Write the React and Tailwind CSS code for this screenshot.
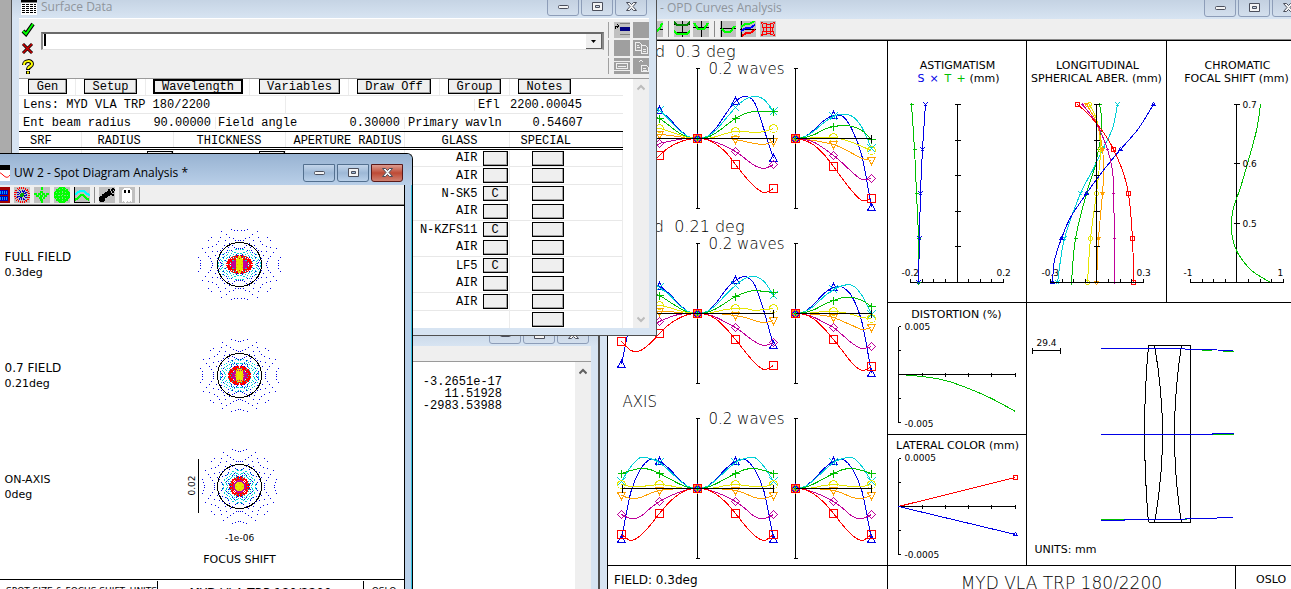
const COLORS = {
  blue: "#0000e6",
  cyan: "#00cfd6",
  green: "#00bf00",
  yellow: "#e6e600",
  orange: "#ffa000",
  purple: "#bf0099",
  red: "#ff0000",
};

// Wavefront error per wavelength, nine samples from pupil centre to edge
const OPD_ROWS = [
  {
    y: 138,
    left: {
      blue: [0, -2, -10, -20, -28, -30, -18, 4, 51],
      cyan: [0, -2, -9, -19, -28, -31, -31, -21, -7],
      green: [0, -1, -6, -13, -20, -22, -22, -19, -15],
      yellow: [0, -1, -4, -7, -10, -8, -6, -5, -4],
      orange: [0, 0, -2, -3, -4, 0, 3, 5, 5],
      purple: [0, 0, 1, 3, 5, 12, 18, 22, 20],
      red: [0, 1, 4, 9, 17, 27, 34, 38, 30],
    },
    middle: {
      blue: [0, -2, -11, -25, -37, -42, -36, -9, 20],
      cyan: [0, -2, -9, -20, -31, -39, -42, -39, -27],
      green: [0, -1, -6, -13, -20, -25, -27, -27, -27],
      yellow: [0, 0, -2, -5, -7, -7, -6, -7, -10],
      orange: [0, 0, 0, 0, 1, 3, 5, 6, 3],
      purple: [0, 1, 4, 8, 13, 20, 27, 30, 26],
      red: [0, 1, 6, 14, 26, 38, 48, 54, 50],
    },
    right: {
      blue: [0, -2, -9, -18, -23, -22, -8, 18, 69],
      cyan: [0, -2, -8, -16, -22, -24, -22, -11, 10],
      green: [0, -1, -4, -9, -12, -13, -12, -8, 1],
      yellow: [0, 0, -1, -1, -1, 1, 4, 8, 12],
      orange: [0, 1, 2, 4, 6, 10, 15, 20, 22],
      purple: [0, 1, 4, 10, 17, 25, 34, 41, 40],
      red: [0, 2, 7, 16, 28, 41, 53, 62, 60],
    },
  },
  {
    y: 313,
    left: {
      blue: [0, -2, -10, -20, -27, -29, -18, 6, 51],
      cyan: [0, -2, -9, -19, -26, -31, -31, -21, -7],
      green: [0, -1, -6, -12, -18, -21, -22, -19, -15],
      yellow: [0, -1, -3, -6, -8, -7, -5, -4, -4],
      orange: [0, 0, -1, -2, -2, 1, 4, 6, 5],
      purple: [0, 0, 1, 4, 8, 13, 18, 20, 18],
      red: [0, 1, 5, 11, 20, 30, 37, 37, 28],
    },
    middle: {
      blue: [0, -2, -11, -24, -33, -37, -29, -2, 32],
      cyan: [0, -2, -9, -19, -28, -35, -37, -32, -18],
      green: [0, -1, -5, -11, -17, -21, -23, -22, -21],
      yellow: [0, 0, -2, -4, -5, -5, -3, -4, -5],
      orange: [0, 0, 0, 1, 2, 4, 7, 9, 7],
      purple: [0, 1, 4, 9, 14, 21, 28, 32, 29],
      red: [0, 1, 6, 15, 26, 38, 49, 56, 52],
    },
    right: {
      blue: [0, -2, -10, -20, -26, -26, -16, 9, 60],
      cyan: [0, -2, -8, -17, -24, -28, -28, -18, 1],
      green: [0, -1, -4, -9, -13, -16, -16, -13, -7],
      yellow: [0, 0, -1, -2, -2, -1, 1, 4, 5],
      orange: [0, 0, 1, 2, 4, 8, 12, 16, 14],
      purple: [0, 1, 4, 9, 14, 22, 30, 35, 33],
      red: [0, 1, 6, 15, 26, 38, 50, 57, 53],
    },
  },
];

const AXIAL = {
  blue: [0, -2, -10, -20, -27, -29, -19, 3, 51],
  cyan: [0, -2, -9, -18, -26, -30, -31, -22, -7],
  green: [0, -1, -5, -10, -15, -19, -20, -18, -15],
  yellow: [0, 0, -1, -3, -4, -3, -2, -2, -4],
  orange: [0, 0, 0, 1, 2, 5, 9, 10, 7],
  purple: [0, 1, 4, 8, 13, 20, 28, 30, 26],
  red: [0, 1, 6, 14, 25, 37, 47, 52, 46],
};
OPD_ROWS.push({ y: 488, left: AXIAL, middle: AXIAL, right: AXIAL });

const smooth = (pts) => {
  let d = `M${pts[0][0]} ${pts[0][1]}`;
  for (let i = 0; i < pts.length - 1; i++) {
    const p0 = pts[i - 1] || pts[i];
    const p1 = pts[i];
    const p2 = pts[i + 1];
    const p3 = pts[i + 2] || p2;
    d += `C${p1[0] + (p2[0] - p0[0]) / 6} ${p1[1] + (p2[1] - p0[1]) / 6} ${
      p2[0] - (p3[0] - p1[0]) / 6
    } ${p2[1] - (p3[1] - p1[1]) / 6} ${p2[0]} ${p2[1]}`;
  }
  return d;
};

const markerPath = (color, x, y, r) => {
  switch (color) {
    case "blue":
      return `M${x} ${y - r}L${x + r} ${y + r - 1}H${x - r}Z`;
    case "cyan":
      return `M${x - r} ${y - r}L${x + r} ${y + r}M${x + r} ${y - r}L${x - r} ${y + r}`;
    case "green":
      return `M${x - r} ${y}H${x + r}M${x} ${y - r}V${y + r}`;
    case "yellow":
      return `M${x - r} ${y}a${r} ${r} 0 1 0 ${2 * r} 0a${r} ${r} 0 1 0 ${-2 * r} 0`;
    case "orange":
      return `M${x} ${y + r}L${x + r} ${y - r + 1}H${x - r}Z`;
    case "purple":
      return `M${x} ${y - r}L${x + r} ${y}L${x} ${y + r}L${x - r} ${y}Z`;
    default:
      return `M${x - r} ${y - r}H${x + r}V${y + r}H${x - r}Z`;
  }
};

const PlotText = ({ size = 11, children, ...rest }) => (
  <text
    fontFamily="'DejaVu Sans', sans-serif"
    fontSize={size}
    fontWeight={size > 12 ? 200 : 400}
    fill="#000"
    stroke="none"
    {...rest}
  >
    {children}
  </text>
);

const Plot = ({ box, label, children }) => (
  <svg
    viewBox={box}
    className="block h-auto w-full"
    role="img"
    aria-label={label}
    fill="none"
    stroke="#000"
    strokeWidth="1"
    shapeRendering="crispEdges"
  >
    <g transform="translate(0.5 0.5)">{children}</g>
  </svg>
);

const OpdCurves = ({ x, y, dir = 1, data }) => (
  <>
    {Object.keys(data).map((c) => (
      <g key={c} stroke={COLORS[c]}>
        <path d={smooth(data[c].map((v, i) => [x + dir * i * 9.5, y + v]))} />
        {[0, 4, 8].map((i) => (
          <path key={i} d={markerPath(c, x + dir * i * 9.5, y + data[c][i], 4)} />
        ))}
      </g>
    ))}
  </>
);

const OpdPanel = () => (
  <Plot box="608 41 279 524" label="OPD curves">
    {OPD_ROWS.map((row) => (
      <g key={row.y}>
        <path
          d={`M697 ${row.y - 70}v140m-2 0h4m-4 -140h4M795 ${row.y - 70}v140m-2 0h4m-4 -140h4`}
        />
        <OpdCurves x={697} y={row.y} dir={-1} data={row.left} />
        <OpdCurves x={697} y={row.y} data={row.middle} />
        <OpdCurves x={795} y={row.y} data={row.right} />
        <path
          d={`M622 ${row.y}h151M622 ${row.y - 4}v8M773 ${row.y - 4}v8M795 ${row.y}h76M871 ${row.y - 4}v8`}
        />
        <PlotText size={15} x={708} y={row.y - 65}>
          0.2 waves
        </PlotText>
      </g>
    ))}
    <PlotText size={16} x={735} y={56} textAnchor="end">
      {"Full Field\u00a0 0.3 deg"}
    </PlotText>
    <PlotText size={16} x={744} y={231} textAnchor="end">
      {"0.7 Field\u00a0 0.21 deg"}
    </PlotText>
    <PlotText size={15} x={622} y={406}>
      AXIS
    </PlotText>
  </Plot>
);

const BottomAxis = ({ x, y = 282 }) => (
  <path
    d={
      `M${x} ${y}h93` +
      [0, 12, 23, 35, 58, 70, 81, 93].map((t) => `M${x + t} ${y}v-4`).join("")
    }
  />
);

const SideAxis = ({ x, ticks }) => (
  <path d={`M${x} 104V282` + ticks.map((t) => `M${x - 3} ${t}h6`).join("")} />
);

const AstigmatismPanel = () => {
  const s = [[925, 104], [922, 149], [920, 193], [919, 238], [918, 282]];
  const t = [[911, 104], [914, 149], [916, 193], [918, 238], [918, 282]];
  return (
    <Plot box="888 41 138 261" label="Astigmatism">
      <PlotText x={957} y={68} textAnchor="middle">
        ASTIGMATISM
      </PlotText>
      <PlotText y={81}>
        <tspan x={917} fill={COLORS.blue}>S</tspan>
        <tspan x={929} fill={COLORS.blue}>×</tspan>
        <tspan x={944} fill={COLORS.green}>T</tspan>
        <tspan x={956} fill={COLORS.green}>+</tspan>
        <tspan x={969}>(mm)</tspan>
      </PlotText>
      <SideAxis x={957} ticks={[104, 140, 175, 211, 246]} />
      <BottomAxis x={910} />
      <g stroke={COLORS.green}>
        <path d={smooth(t)} />
        {t.map(([x, y]) => (
          <path key={y} d={markerPath("green", x, y, 2)} />
        ))}
      </g>
      <g stroke={COLORS.blue}>
        <path d={smooth(s)} />
        {s.map(([x, y]) => (
          <path key={y} d={markerPath("cyan", x, y, 2)} />
        ))}
      </g>
      <PlotText size={9} x={901} y={275}>
        -0.2
      </PlotText>
      <PlotText size={9} x={996} y={275}>
        0.2
      </PlotText>
    </Plot>
  );
};

const SPHERICAL = {
  green: [[1099, 104], [1101, 118], [1100, 138], [1098, 149], [1094, 168], [1086, 193], [1075, 238], [1071, 282]],
  cyan: [[1117, 104], [1112, 128], [1102, 149], [1092, 170], [1080, 193], [1064, 238], [1057, 282]],
  yellow: [[1089, 104], [1097, 122], [1100, 149], [1098, 175], [1096, 193], [1090, 238], [1087, 282]],
  orange: [[1086, 104], [1096, 122], [1102, 149], [1103, 172], [1102, 193], [1098, 238], [1096, 282]],
  blue: [[1153, 104], [1138, 128], [1120, 149], [1102, 171], [1086, 193], [1070, 217], [1061, 238], [1054, 260], [1052, 282]],
  purple: [[1082, 104], [1096, 123], [1107, 149], [1112, 170], [1113, 193], [1114, 238], [1114, 282]],
  red: [[1077, 104], [1085, 111], [1097, 124], [1107, 138], [1113, 149], [1122, 170], [1128, 193], [1132, 238], [1133, 282]],
};

const SphericalPanel = () => (
  <Plot box="1027 41 139 261" label="Longitudinal spherical aberration">
    <PlotText x={1097} y={68} textAnchor="middle">
      LONGITUDINAL
    </PlotText>
    <PlotText x={1096} y={81} textAnchor="middle">
      SPHERICAL ABER. (mm)
    </PlotText>
    <PlotText size={9} x={1041} y={275}>
      -0.3
    </PlotText>
    <PlotText size={9} x={1136} y={275}>
      0.3
    </PlotText>
    {Object.keys(SPHERICAL).map((c) => (
      <g key={c} stroke={COLORS[c]}>
        <path d={smooth(SPHERICAL[c])} />
        {SPHERICAL[c]
          .filter(([, y]) => [104, 149, 193, 238, 282].includes(y))
          .map(([x, y]) => (
            <path key={y} d={markerPath(c, x, y, c === "purple" ? 1 : 2)} />
          ))}
      </g>
    ))}
    <SideAxis x={1096} ticks={[104, 140, 175, 211, 246]} />
    <BottomAxis x={1050} />
  </Plot>
);

const ChromaticPanel = () => (
  <Plot box="1167 41 139 261" label="Chromatic focal shift">
    <PlotText x={1237} y={68} textAnchor="middle">
      CHROMATIC
    </PlotText>
    <PlotText x={1236} y={81} textAnchor="middle">
      FOCAL SHIFT (mm)
    </PlotText>
    <SideAxis x={1236} ticks={[104, 163, 223]} />
    <BottomAxis x={1190} />
    <path
      stroke={COLORS.green}
      d={smooth([[1260, 104], [1256, 130], [1247, 163], [1240, 187], [1233, 207], [1231, 222], [1232, 238], [1237, 252], [1247, 266], [1255, 273], [1270, 282]])}
    />
    <PlotText size={9} x={1242} y={107}>
      0.7
    </PlotText>
    <PlotText size={9} x={1242} y={166}>
      0.6
    </PlotText>
    <PlotText size={9} x={1242} y={226}>
      0.5
    </PlotText>
    <PlotText size={9} x={1183} y={275}>
      -1
    </PlotText>
    <PlotText size={9} x={1277} y={275}>
      1
    </PlotText>
  </Plot>
);

const QuarterAxes = ({ y }) => (
  <path
    d={`M898 ${y - 48}V${y + 48}m0 0h2M898 ${y - 48}h2M898 ${y - 24}h2M898 ${y + 24}h2M898 ${y}H1015M922 ${y - 2}v4M945 ${y - 2}v4M968 ${y - 2}v4M991 ${y - 2}v4M1015 ${y - 2}v4`}
  />
);

const DistortionPanel = () => (
  <Plot box="888 303 138 131" label="Distortion">
    <PlotText x={956} y={317} textAnchor="middle">
      DISTORTION (%)
    </PlotText>
    <QuarterAxes y={374} />
    <path
      stroke={COLORS.green}
      d={smooth([[906, 375], [922, 376], [945, 380], [968, 388], [991, 398], [1015, 411]])}
    />
    <PlotText size={9} x={904} y={329}>
      0.005
    </PlotText>
    <PlotText size={9} x={904} y={426}>
      -0.005
    </PlotText>
  </Plot>
);

const LateralPanel = () => (
  <Plot box="888 435 138 130" label="Lateral color">
    <PlotText x={957} y={448} textAnchor="middle">
      LATERAL COLOR (mm)
    </PlotText>
    <QuarterAxes y={506} />
    <path stroke={COLORS.red} d="M898 506L1015 477" />
    <path stroke={COLORS.red} d={markerPath("red", 1015, 477, 2)} />
    <path stroke={COLORS.blue} d="M898 506L1015 534" />
    <path stroke={COLORS.blue} d={markerPath("blue", 1015, 534, 2)} />
    <PlotText size={9} x={904} y={460}>
      0.0005
    </PlotText>
    <PlotText size={9} x={904} y={557}>
      -0.0005
    </PlotText>
  </Plot>
);

const LensPanel = () => (
  <Plot box="1027 303 279 262" label="Lens drawing">
    <path d="M1032 350h28M1032 347v6M1060 347v6" />
    <PlotText size={9} x={1036} y={345}>
      29.4
    </PlotText>
    <path d="M1148 345H1190V522H1148" />
    <path d="M1148 345Q1140 434 1148 522M1154 345Q1170 434 1154 522M1181 345Q1167 434 1181 522" />
    <g stroke={COLORS.green}>
      <path d="M1100 519H1186M1201 350h10M1222 351h11M1212 434h21M1201 518h10" />
    </g>
    <g stroke={COLORS.blue}>
      <path d="M1100 348H1168L1233 350M1100 434H1212V433H1233M1100 520H1124V519H1168L1233 517" />
    </g>
    <PlotText x={1034} y={552}>
      UNITS: mm
    </PlotText>
  </Plot>
);

// Ray displacement is proportional to the slope of the wavefront error
const raySlope = (v, rho) => {
  const n = v.length - 1;
  const mid = v.slice(1).map((e, i) => e - v[i]);
  const slopes = [0];
  for (let i = 1; i < n; i++) slopes.push((mid[i - 1] + mid[i]) / 2);
  slopes.push(mid[n - 1] * 1.5 - mid[n - 2] * 0.5);
  const t = rho * n;
  const i = Math.min(n - 1, Math.floor(t));
  return slopes[i] + (slopes[i + 1] - slopes[i]) * (t - i);
};

// scale, then how much the spot widens (x) and grows (y) towards full field
const SPOTS = [
  { c: "blue", scale: 0.66, x: 0.1, y: -0.04 },
  { c: "green", scale: 0.9, x: 0.2, y: -0.1 },
  { c: "cyan", scale: 1, x: 0.3, y: -0.1 },
  { c: "red", scale: 0.85, x: 0.3, y: -0.1 },
  { c: "purple", scale: 0.8, x: 0.4, y: -0.2 },
  { c: "orange", scale: 0.8, x: 0, y: 0.3 },
  { c: "yellow", scale: 1.6, x: -0.2, y: 0.9 },
];

const Spot = ({ y, field }) => (
  <g>
    {SPOTS.map((s) => {
      let d = "";
      for (let i = -12.5; i <= 12.5; i++) {
        for (let j = -12.5; j <= 12.5; j++) {
          const rho = Math.hypot(i, j) / 13;
          if (rho > 0.99) continue;
          const f = (raySlope(AXIAL[s.c], rho) * s.scale) / rho / 13;
          const dx = Math.round(i * f * (1 + s.x * field));
          const dy = Math.round(j * f * (1 + s.y * field));
          d += `M${239 + dx} ${y + dy}h1`;
        }
      }
      return <path key={s.c} d={d} stroke={COLORS[s.c]} transform="translate(-0.5 0)" />;
    })}
    <circle cx={239} cy={y} r={22} />
  </g>
);

const SpotPanel = () => (
  <Plot box="0 206 404 373" label="Spot diagrams">
    <Spot y={264} field={1} />
    <Spot y={375} field={0.5} />
    <Spot y={486} field={0} />
    <PlotText size={12} x={4} y={260}>
      FULL FIELD
    </PlotText>
    <PlotText x={4} y={275}>
      0.3deg
    </PlotText>
    <PlotText size={12} x={4} y={371}>
      0.7 FIELD
    </PlotText>
    <PlotText x={4} y={386}>
      0.21deg
    </PlotText>
    <PlotText x={4} y={482}>
      ON-AXIS
    </PlotText>
    <PlotText x={4} y={497}>
      0deg
    </PlotText>
    <path d="M198 458V512" />
    <PlotText size={9} textAnchor="middle" transform="translate(194 485) rotate(-90)">
      0.02
    </PlotText>
    <PlotText size={9} x={239} y={540} textAnchor="middle">
      -1e-06
    </PlotText>
    <PlotText x={239} y={562} textAnchor="middle">
      FOCUS SHIFT
    </PlotText>
  </Plot>
);

const CaptionButton = ({ label, active, close, children }) => (
  <button
    type="button"
    aria-label={label}
    className={`flex h-[18px] w-8 items-center justify-center rounded-b-[3px] border ${
      active
        ? close
          ? "border-[#5a1a1a] bg-gradient-to-b from-[#dc9c90] via-[#bd4a35] to-[#d08070]"
          : "border-[#53708f] bg-gradient-to-b from-[#c3d5ea] via-[#9db8d6] to-[#b9d0e9]"
        : "border-[#8d9db8] bg-gradient-to-b from-[#c3d0e0] to-[#d3dfed]"
    }`}
  >
    <svg width="14" height="12" fill="#f4f4f4" stroke="#4b4f5c">
      {children}
    </svg>
  </button>
);

const Caption = ({ active, icon, title }) => (
  <div
    className={`flex h-[31px] shrink-0 items-center gap-1 px-[7px] ${
      active
        ? "bg-gradient-to-b from-[#98b3d2] to-[#b9cfe8] pt-[6px] text-black"
        : "bg-gradient-to-b from-[#b9c8da] to-[#d7e4f2] pt-2 text-[#8f959c]"
    }`}
  >
    {icon}
    <h2 className="flex-1 truncate font-['Open_Sans',sans-serif] text-xs">{title}</h2>
    <div className="mr-[2px] flex gap-[2px]">
      <CaptionButton label="Minimize" active={active}>
        <rect x="2.5" y="4.5" width="10" height="3" rx="1" />
      </CaptionButton>
      <CaptionButton label="Restore" active={active}>
        <path fillRule="evenodd" d="M2.5 1.5h10v8h-10zM5.5 4.5h4v2h-4z" />
      </CaptionButton>
      <CaptionButton label="Close" active={active} close>
        <path d="M2.5 1.5h3l2 2 2-2h3l-3.5 4 3.5 4h-3l-2-2-2 2h-3l3.5-4z" />
      </CaptionButton>
    </div>
  </div>
);

const Tool = ({ label, children }) => (
  <button type="button" aria-label={label} className="h-4 w-4 shrink-0">
    <svg
      width="16"
      height="16"
      fill="none"
      strokeWidth="2"
      shapeRendering="crispEdges"
      className="bg-[#c0c0c0]"
    >
      {children}
    </svg>
  </button>
);

const Divider = () => <span className="mx-px h-4 w-px bg-[#8a8a8a]" />;

const CurveIcon = () => (
  <svg width="16" height="16" fill="none" className="shrink-0 bg-white">
    <rect width="16" height="5" fill="#000" />
    <path d="M0 11C3 6 6 7 9 10s5 3 7 0" stroke="#f00" />
  </svg>
);

const OpdWindow = () => (
  <section className="absolute -top-[13px] -right-[23px] -bottom-5 left-[599px] flex flex-col border border-[#505050] bg-[#d7e4f2]">
    <Caption icon={<CurveIcon />} title="UW 1 - OPD Curves Analysis" />
    <div className="mx-[7px] flex flex-1 flex-col bg-white">
      <div className="flex h-[21px] shrink-0 items-center gap-1 border-b border-[#8a8a8a] bg-[#efefef] pl-10">
        <Tool label="Ray fans">
          <path d="M8 0v16M0 8h16" stroke="#000" strokeWidth="1" />
          <path d="M0 13C8 14 14 8 15 2" stroke="#0f0" />
        </Tool>
        <Divider />
        <div className="flex gap-[3px]">
          <Tool label="Field curves">
            <path d="M0 3.5h16M0 11.5h16M8.5 0v16" stroke="#000" strokeWidth="1" />
            <path d="M0 1l3 3h10l3-3" stroke="#008000" />
            <path d="M0 10l3 3h10l3-3" stroke="#0f0" />
          </Tool>
          <Tool label="OPD">
            <path d="M0 6.5h16M8.5 0v16" stroke="#000" strokeWidth="1" />
            <path d="M1 2l4 6h6l4-6" stroke="#0f0" />
          </Tool>
        </div>
        <Divider />
        <div className="flex gap-1">
          <Tool label="Focal shift">
            <path d="M1.5 0v16M0 7.5h16" stroke="#000" strokeWidth="1" />
            <path d="M2 8l3 3h5l5-6" stroke="#0f0" />
          </Tool>
          <Tool label="Color curves">
            <path d="M1.5 0v16M0 8.5h16" stroke="#000" strokeWidth="1" />
            <path d="M1 6l4-3h4l6-3" stroke="#0f0" />
            <path d="M1 10l5-3h4l5-3" stroke="#00f" />
            <path d="M2 15l4-3h4l5-3" stroke="#f00" />
          </Tool>
          <Tool label="Distortion grid">
            <path
              d="M1 1c4 3 10 3 14 0-3 4-3 10 0 14-4-3-10-3-14 0 3-4 3-10 0-14zM6.5 2v12M10.5 2v12M2 6.5h12M2 10.5h12"
              stroke="#f00"
              strokeWidth="1"
            />
          </Tool>
        </div>
      </div>
      <div className="grid grid-cols-[280fr_139fr_140fr_140fr]">
        <div className="row-span-3 border-t border-l border-black">
          <OpdPanel />
        </div>
        <div className="border-t border-l border-black">
          <AstigmatismPanel />
        </div>
        <div className="border-t border-l border-black">
          <SphericalPanel />
        </div>
        <div className="border-t border-l border-black">
          <ChromaticPanel />
        </div>
        <div className="border-t border-l border-black">
          <DistortionPanel />
        </div>
        <div className="col-span-2 row-span-2 border-t border-l border-black">
          <LensPanel />
        </div>
        <div className="border-t border-l border-black">
          <LateralPanel />
        </div>
      </div>
      <div className="grid flex-1 grid-cols-[280fr_349fr_70fr] divide-x divide-black border-t border-l border-black font-['DejaVu_Sans',sans-serif] text-[11px]">
        <p className="px-[6px] pt-[6px] text-xs">FIELD: 0.3deg</p>
        <p className="pt-[7px] text-center text-[17px] leading-5 font-extralight">
          MYD VLA TRP 180/2200
        </p>
        <p className="pt-[6px] text-center">OSLO</p>
      </div>
    </div>
  </section>
);

const TextWindow = () => (
  <section className="absolute top-[314px] -bottom-5 left-[300px] flex w-[299px] flex-col border border-[#505050] bg-[#d7e4f2]">
    <Caption title="" />
    <div className="mx-[7px] flex flex-1 flex-col bg-white">
      <div className="h-4 border-b border-[#9a9a9a] bg-[#efefef]" />
      <div className="flex flex-1">
        <pre className="flex-1 pt-[14px] pr-[73px] text-right font-['Liberation_Mono',monospace] text-xs leading-3">
          {"-3.2651e-17\n11.51928\n-2983.53988"}
        </pre>
        <div className="flex w-4 justify-center bg-[#efefef] pt-[6px]">
          <svg width="8" height="7" fill="none" stroke="#606060" strokeWidth="2">
            <path d="M0.5 5.5l3.5-3.5 3.5 3.5" />
          </svg>
        </div>
      </div>
    </div>
  </section>
);

const SheetButton = ({ className, children }) => (
  <button
    type="button"
    className={`h-[15px] border border-black bg-[#efefef] text-center leading-3 shadow-[inset_-1px_-1px_0_#a0a0a0] ${className}`}
  >
    {children}
  </button>
);

const MENU = [
  { label: "Gen", cell: "w-[57px] pl-[9px]", width: "w-[39px]" },
  { label: "Setup", cell: "w-[70px] pl-2", width: "w-[53px]" },
  { label: "Wavelength", cell: "w-[104px] pl-[7px]", width: "w-[90px] outline -outline-offset-2 outline-black" },
  { label: "Variables", cell: "w-[99px] pl-[9px]", width: "w-[81px]" },
  { label: "Draw Off", cell: "w-[91px] pl-2", width: "w-[74px]" },
  { label: "Group", cell: "w-[70px] pl-2", width: "w-[53px]" },
  { label: "Notes", cell: "flex-1 pl-2 border-r-0", width: "w-[53px]" },
];

const SURFACES = [
  { glass: "AIR", line: true },
  { glass: "AIR", line: true },
  { glass: "N-SK5", catalog: "C" },
  { glass: "AIR", line: true },
  { glass: "N-KZFS11", catalog: "C" },
  { glass: "AIR", line: true },
  { glass: "LF5", catalog: "C" },
  { glass: "AIR", line: true },
  { glass: "AIR", line: true },
  {},
];

const GreyTool = ({ label, children }) => (
  <button type="button" aria-label={label} className="h-4 w-4 overflow-hidden bg-[#9f9f9f]">
    <svg width="16" height="16" fill="none" stroke="#efefef" shapeRendering="crispEdges">
      {children}
    </svg>
  </button>
);

const SurfaceToolbar = () => (
  <div className="flex h-[61px] shrink-0 border-t border-b border-t-white border-b-[#9a9a9a] bg-[#efefef]">
    <div className="flex w-[22px] flex-col items-start gap-1 pt-[3px] pl-[2px]">
      <button type="button" aria-label="Accept">
        <svg width="14" height="15" fill="none">
          <path d="M2 9l3 3 7-10" stroke="#000" strokeWidth="4" />
          <path d="M2 9l3 3 7-10" stroke="#0f0" strokeWidth="2" />
        </svg>
      </button>
      <button type="button" aria-label="Cancel">
        <svg width="14" height="14" fill="none">
          <path d="M2 3l9 9M11 3l-9 9" stroke="#000" strokeWidth="3" />
          <path d="M2 3l9 9M11 3l-9 9" stroke="#d00000" strokeWidth="1.5" />
        </svg>
      </button>
      <button type="button" aria-label="Help">
        <svg width="14" height="16" fill="none">
          <path d="M3 6c0-5 8-5 8-1 0 3-4 2-4 6M7 12v3" stroke="#000" strokeWidth="4" />
          <path d="M3 6c0-5 8-5 8-1 0 3-4 2-4 5M7 12.5v2" stroke="#ff0" strokeWidth="2" />
        </svg>
      </button>
    </div>
    <div className="relative mt-[13px] flex h-[18px] flex-1 border-t-2 border-r-2 border-b border-l-2 border-t-[#6b6b6b] border-r-[#8a8a8a] border-b-[#e0e0e0] border-l-[#8a8a8a] bg-white">
      <input
        type="text"
        aria-label="Command"
        className="h-full min-w-0 flex-1 px-1 font-['Liberation_Mono',monospace] text-xs outline-none"
      />
      <span className="absolute top-0 left-px h-3 w-[2px] bg-black" />
      <button
        type="button"
        aria-label="Command history"
        className="flex w-4 items-center justify-center border-r border-b border-[#606060] bg-[#efefef]"
      >
        <svg width="5" height="3">
          <path d="M0 0h5L2.5 3z" />
        </svg>
      </button>
    </div>
    <div className="ml-1 flex w-[41px] flex-col gap-[2px] pt-[3px]">
      <div className="flex gap-[3px] border-l border-[#a0a0a0] pl-[5px]">
        <button type="button" aria-label="Insert row" className="h-4 w-4 bg-[#c0c0c0]">
          <svg width="16" height="16" fill="none" shapeRendering="crispEdges">
            <path d="M1 7V4h4M3 2l2 2-2 2" stroke="#000" />
            <path d="M6 1.5h10M6 12.5h10" stroke="#808080" />
            <path d="M6 7h10" stroke="#000080" strokeWidth="4" />
          </svg>
        </button>
        <GreyTool label="Cut" />
      </div>
      <div className="flex gap-[3px] border-l border-[#a0a0a0] pl-[5px]">
        <GreyTool label="Delete" />
        <GreyTool label="Copy">
          <path d="M2.5 2.5h4l2 2v6h-6zM8.5 5.5h4l2 2v6h-6zM4 5.5h2M4 7.5h3M10 9.5h3M10 11.5h3" />
        </GreyTool>
      </div>
      <div className="flex gap-[3px] border-l border-[#a0a0a0] pl-[5px]">
        <GreyTool label="Group rows">
          <path d="M0 3.5h16M0 12.5h16M2.5 5.5h11v5h-11zM4 8.5h8" />
        </GreyTool>
        <GreyTool label="Paste">
          <path d="M6 3.5l2-1 2 1M8.5 7.5h5l2 2v4h-7zM10 10.5h3M10 12.5h4" />
        </GreyTool>
      </div>
    </div>
  </div>
);

const SurfaceTable = () => (
  <table className="w-full table-fixed border-collapse">
    <colgroup>
      <col className="w-[62px]" />
      <col className="w-[92px]" />
      <col className="w-[112px]" />
      <col className="w-[119px]" />
      <col className="w-[105px]" />
      <col />
    </colgroup>
    <thead>
      <tr className="h-4 border-b-3 border-double border-black text-left [&>th]:border-r [&>th]:border-r-[#ececec] [&>th]:p-0 [&>th]:pt-[3px] [&>th]:font-normal [&>th]:leading-3">
        <th>
          <span className="pl-[11px]">SRF</span>
        </th>
        <th>
          <span className="pl-4">RADIUS</span>
        </th>
        <th className="text-center">THICKNESS</th>
        <th className="text-right">
          <span className="pr-[2px]">APERTURE RADIUS</span>
        </th>
        <th className="text-center">
          <span className="pl-[6px]">GLASS</span>
        </th>
        <th>
          <span className="pl-[11px]">SPECIAL</span>
        </th>
      </tr>
    </thead>
    <tbody>
      {SURFACES.map((s, i) => (
        <tr
          key={i}
          className={`h-[18px] [&>td]:border-r [&>td]:border-r-[#ececec] [&>td]:p-0 ${
            s.line ? "border-b border-b-[#e8e8e8]" : ""
          }`}
        >
          <td />
          <td>
            <SheetButton className="ml-auto block w-[26px]" />
          </td>
          <td>
            <SheetButton className="ml-auto block w-[26px]" />
          </td>
          <td />
          <td>
            {s.glass && (
              <div className="flex items-center justify-end gap-[5px] leading-3">
                {s.glass}
                <SheetButton className="mr-[1px] w-[25px]">{s.catalog}</SheetButton>
              </div>
            )}
          </td>
          <td>
            <SheetButton className="ml-[22px] block w-8" />
          </td>
        </tr>
      ))}
    </tbody>
  </table>
);

const SurfaceWindow = () => (
  <section className="absolute -top-[14px] left-[11px] flex h-[350px] w-[646px] flex-col border border-[#505050] bg-[#d7e4f2] pb-[7px]">
    <Caption
      title="Surface Data"
      icon={
        <svg width="16" height="16" fill="none" className="ml-[2px] shrink-0 bg-white">
          <path d="M0 1.5h16" stroke="#000" strokeWidth="4" />
          <path
            d="M1 5.5h14M1 7.5h14M1 9.5h14M1 11.5h14M1 13.5h14"
            stroke="#000"
            strokeDasharray="3 1"
          />
        </svg>
      }
    />
    <div className="mx-[7px] flex min-h-0 flex-1 flex-col bg-white">
      <SurfaceToolbar />
      <div className="flex min-h-0 flex-1 overflow-hidden font-['Liberation_Mono',monospace] text-xs">
        <div className="min-w-0 flex-1">
          <div className="flex h-[17px] border-b border-[#e8e8e8]">
            {MENU.map((m) => (
              <div key={m.label} className={`flex border-r border-[#ececec] ${m.cell}`}>
                <SheetButton className={m.width}>{m.label}</SheetButton>
              </div>
            ))}
          </div>
          <div className="flex h-[18px] items-center border-b border-[#e8e8e8] leading-3">
            <span className="w-[267px] self-stretch border-r border-[#ececec] pt-[3px] pl-1">
              Lens: MYD VLA TRP 180/2200
            </span>
            <span className="ml-[188px] w-[108px] border-l border-[#ececec] pl-[3px]">
              <span className="flex justify-between">
                <span>Efl</span>
                <span>2200.00045</span>
              </span>
            </span>
          </div>
          <div className="flex h-[18px] items-center border-b border-black leading-3">
            <span className="flex w-[197px] justify-between border-r border-[#ececec] px-1">
              <span>Ent beam radius</span>
              <span>90.00000</span>
            </span>
            <span className="flex w-[189px] justify-between border-r border-[#ececec] pr-1 pl-[2px]">
              <span>Field angle</span>
              <span>0.30000</span>
            </span>
            <span className="flex w-[178px] justify-between pl-[3px]">
              <span>Primary wavln</span>
              <span>0.54607</span>
            </span>
          </div>
          <SurfaceTable />
        </div>
        <div className="ml-[10px] flex w-4 flex-col items-center justify-between bg-[#efefef] py-[5px]">
          <svg width="8" height="7" fill="none" stroke="#bcbcbc" strokeWidth="2">
            <path d="M0.5 5.5l3.5-3.5 3.5 3.5" />
          </svg>
          <svg width="8" height="7" fill="none" stroke="#bcbcbc" strokeWidth="2">
            <path d="M0.5 1.5l3.5 3.5 3.5-3.5" />
          </svg>
        </div>
      </div>
    </div>
  </section>
);

const SpotWindow = () => (
  <section className="absolute top-[153px] -bottom-5 left-0 flex w-[413px] flex-col overflow-hidden rounded-tr-md border-t border-r border-black bg-[#b9d0e9] shadow-[inset_-1px_0_0_#35c0e0]">
    <div className="-ml-[13px] flex flex-col">
      <Caption active icon={<CurveIcon />} title="UW 2 - Spot Diagram Analysis *" />
    </div>
    <div className="mr-[7px] flex flex-1 flex-col border-r border-black bg-white">
      <div className="flex h-5 shrink-0 items-center gap-1 overflow-hidden border-b border-[#8a8a8a] bg-[#efefef]">
        <div className="-ml-[6px] flex gap-1">
          <Tool label="Spot grid">
            <rect width="16" height="16" fill="#a00000" />
            <path d="M2 5h12M2 11h12" stroke="#0000c0" strokeWidth="5" />
            <path d="M2 5h12M2 11h12" stroke="#00a0ff" strokeWidth="3" strokeDasharray="1 1" />
          </Tool>
          <Tool label="Spot diagram">
            <circle cx="8" cy="8" r="7" stroke="#f00" strokeDasharray="1 1" />
            <circle cx="8" cy="8" r="4" stroke="#0000c0" strokeWidth="3" strokeDasharray="1 1" />
            <circle cx="8" cy="8" r="1" stroke="#00a000" />
          </Tool>
          <Tool label="Through focus">
            <path
              d="M8 0v3M6 5h4M0 7h16M2 9h12M5 11h6M6 13h4M8 13v3"
              stroke="#0f0"
              strokeDasharray="3 1"
            />
          </Tool>
          <Tool label="Full pupil">
            <circle cx="8" cy="8" r="8" fill="#0f0" />
            <path
              d="M2 5h12M1 8h14M2 11h12M5 2v12M8 1v14M11 2v12"
              stroke="#80e080"
              strokeWidth="1"
              strokeDasharray="1 2"
            />
          </Tool>
          <Tool label="Energy curves">
            <path d="M0.5 0v15.5h15.5" stroke="#000" strokeWidth="1" />
            <path d="M1 8l3-3 3-1h3l3 3 3 1" stroke="#0ff" />
            <path d="M1 13l3-2 3-3h2l3 3 3 2" stroke="#0f0" />
          </Tool>
        </div>
        <span className="h-4 w-px bg-[#8a8a8a]" />
        <Tool label="Point spread">
          <path d="M4 10L12 5" stroke="#000" strokeWidth="5" />
          <circle cx="3" cy="12" r="3" fill="#000" />
          <path d="M9 3h7M13.5 1v8" stroke="#000" strokeDasharray="2 1" />
        </Tool>
        <Tool label="Ghosts">
          <path d="M3 15V5c0-6 10-6 10 0v10l-2-1-1 2-2-2-2 2-1-2z" fill="#fff" />
          <path d="M6 3v3M10 3v3" stroke="#000" strokeWidth="2" />
        </Tool>
        <span className="h-4 w-px bg-[#8a8a8a]" />
      </div>
      <div className="border-t border-black">
        <SpotPanel />
      </div>
      <div className="grid flex-1 grid-cols-[158fr_206fr_40fr] divide-x divide-black border-t border-black pt-px font-['DejaVu_Sans',sans-serif] text-[9px]">
        <p className="overflow-hidden pt-1 pl-[6px] whitespace-nowrap">
          SPOT SIZE & FOCUS SHIFT: UNITS mm
        </p>
        <p className="pt-1 text-center text-xs">MYD VLA TRP 180/2200</p>
        <p className="pt-1 text-center">OSLO</p>
      </div>
    </div>
  </section>
);

const App = () => {
  return (
    <main className="relative h-screen w-full overflow-hidden bg-[#ababab] text-black">
      <OpdWindow />
      <TextWindow />
      <SurfaceWindow />
      <SpotWindow />
    </main>
  );
};

export default App;
